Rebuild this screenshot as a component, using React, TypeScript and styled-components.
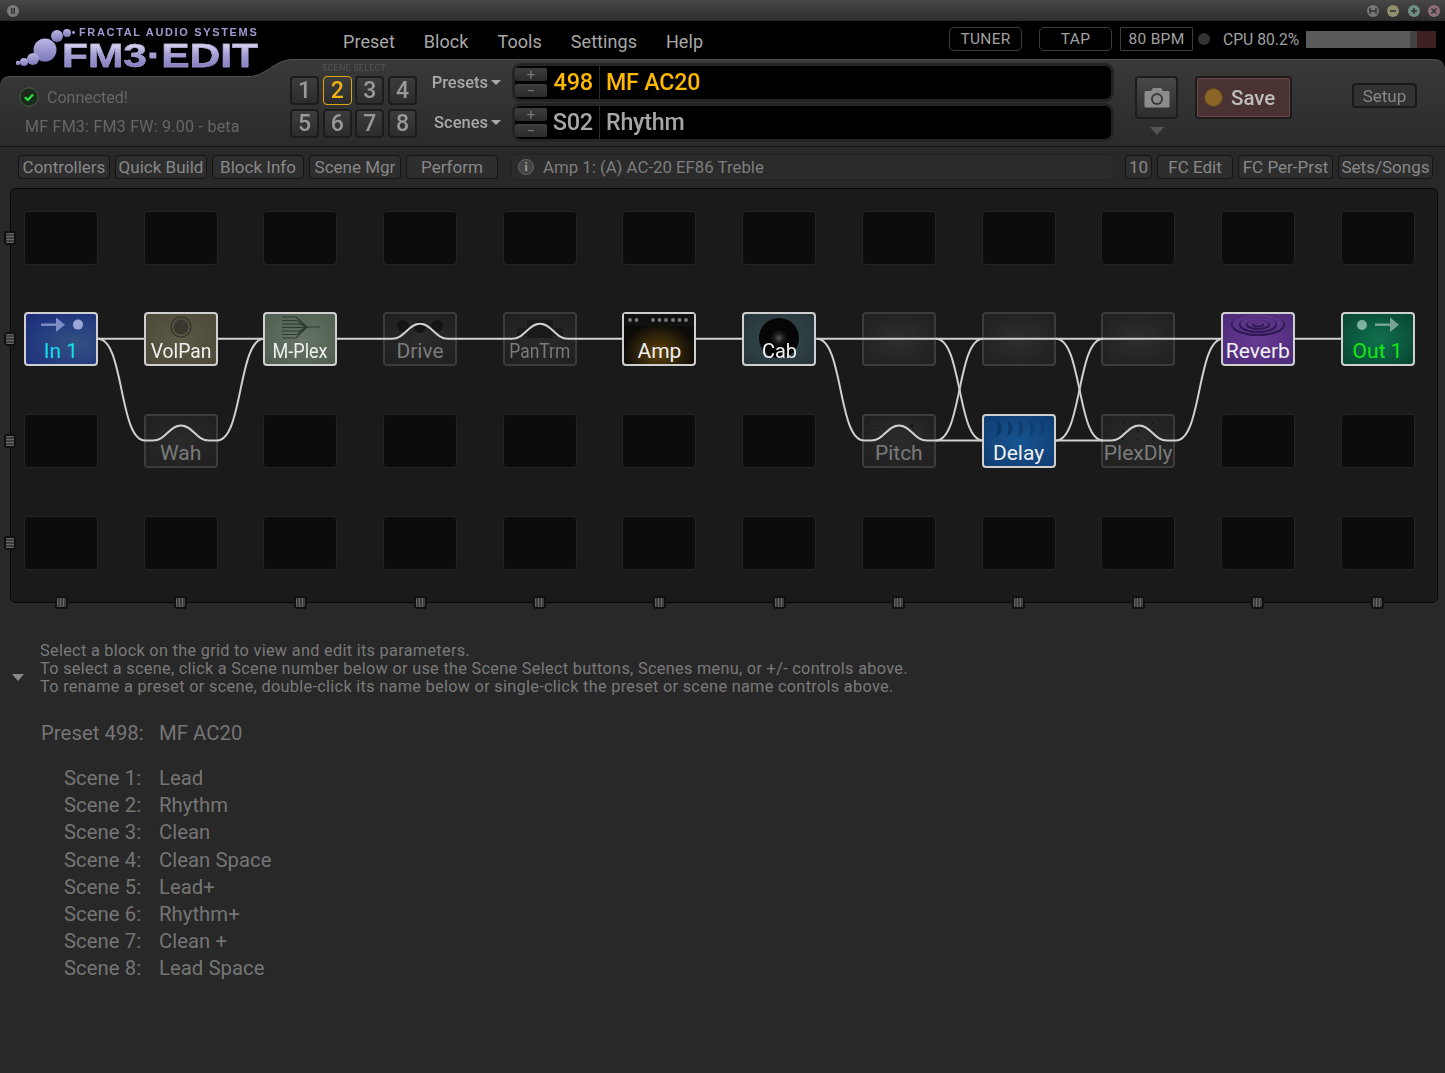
import React from "react";
import styled, { createGlobalStyle } from "styled-components";

const GlobalStyle = createGlobalStyle`
  html, body {
    margin: 0;
    padding: 0;
    background: #282828;
  }
  * {
    box-sizing: border-box;
  }
`;

const COL_WIDTH = 74;
const COL_GAP = 45.7;
const ROW_HEIGHT = 54;
const ROW_GAP = 47.7;
const WIRE_TOP = 338.8;
const WIRE_BOTTOM = 440.5;

type Tone = "in" | "vol" | "plex" | "amp" | "cab" | "delay" | "reverb" | "out" | "dim" | "shunt" | "empty";

type Cell = { tone: Tone; label?: string; squeeze?: number };

const empty: Cell = { tone: "empty" };

const rows: Cell[][] = [
  Array(12).fill(empty),
  [
    { tone: "in", label: "In 1" },
    { tone: "vol", label: "VolPan", squeeze: 0.92 },
    { tone: "plex", label: "M-Plex", squeeze: 0.86 },
    { tone: "dim", label: "Drive" },
    { tone: "dim", label: "PanTrm", squeeze: 0.83 },
    { tone: "amp", label: "Amp" },
    { tone: "cab", label: "Cab", squeeze: 0.95 },
    { tone: "shunt" },
    { tone: "shunt" },
    { tone: "shunt" },
    { tone: "reverb", label: "Reverb" },
    { tone: "out", label: "Out 1" },
  ],
  [
    empty,
    { tone: "dim", label: "Wah" },
    empty,
    empty,
    empty,
    empty,
    empty,
    { tone: "dim", label: "Pitch" },
    { tone: "delay", label: "Delay" },
    { tone: "dim", label: "PlexDly" },
    empty,
    empty,
  ],
  Array(12).fill(empty),
];

const toneBackground: Record<Tone, string> = {
  in: "radial-gradient(ellipse at 70% 60%, #34517f 0%, #233a80 60%, #1c2a78 100%)",
  vol: "radial-gradient(ellipse at center, #5c5845 0%, #4d4938 100%)",
  plex: "radial-gradient(ellipse at center, #667564 0%, #4f5e50 100%)",
  amp: "radial-gradient(ellipse 36px 30px at 50% 78%, #5d4208 0%, #33250a 55%, #0c0b08 100%)",
  cab: "radial-gradient(ellipse at center, #374a4e 0%, #26353a 100%)",
  delay: "radial-gradient(ellipse at center, #175590 0%, #0f3c72 100%)",
  reverb: "radial-gradient(ellipse at center, #673a93 0%, #4c2a78 100%)",
  out: "radial-gradient(ellipse at center, #11714f 0%, #084430 100%)",
  dim: "radial-gradient(ellipse at center, #2b2b2b 0%, #1f1f1f 100%)",
  shunt: "radial-gradient(ellipse at center, #2e2e2e 0%, #1f1f1f 100%)",
  empty: "#0c0c0c",
};

const toneLabel: Partial<Record<Tone, string>> = {
  in: "#17dcee",
  out: "#12e812",
  dim: "#7b7b7b",
};

const Root = styled.div`
  position: relative;
  width: 1445px;
  height: 1073px;
  overflow: hidden;
  background: #282828;
  font-family: Roboto, "Liberation Sans", sans-serif;
  color: #808080;
`;

const TitleBar = styled.div`
  height: 21px;
  display: flex;
  align-items: center;
  justify-content: space-between;
  padding: 0 5px 0 7px;
  background: linear-gradient(#474747, #2c2c2c);
`;

const WindowButtons = styled.div`
  display: flex;
  gap: 8.3px;
`;

const WindowButton = styled.span<{ $color: string }>`
  width: 12px;
  height: 12px;
  border-radius: 50%;
  background: ${(p) => p.$color};
  display: flex;
  align-items: center;
  justify-content: center;
`;

const TopArea = styled.div`
  position: relative;
  background: #000;
`;

const MenuRow = styled.div`
  height: 39px;
  display: flex;
  align-items: flex-start;
  padding-left: 343px;
`;

const Menu = styled.nav`
  display: flex;
  gap: 29px;
  width: 606px;
  padding-top: 10px;
`;

const MenuItem = styled.span`
  font-size: 18px;
  line-height: 21px;
  letter-spacing: 0.05px;
  color: #a8a8a8;
`;

const Logo = styled.div`
  position: absolute;
  left: 0;
  top: 0;
  width: 270px;
  height: 72px;
`;

const LogoTag = styled.div`
  position: absolute;
  left: 79px;
  top: 5px;
  font-family: "Liberation Sans", sans-serif;
  font-size: 10.5px;
  line-height: 12px;
  font-weight: 700;
  letter-spacing: 1.6px;
  color: #a09bd2;
  white-space: nowrap;
  transform: scaleX(1.045);
  transform-origin: left center;
`;

const LogoName = styled.div`
  position: absolute;
  left: 62px;
  top: 20px;
  font-family: "Liberation Sans", sans-serif;
  font-size: 34px;
  line-height: 28px;
  font-weight: 700;
  white-space: nowrap;
  transform: scaleX(1.25);
  transform-origin: left center;
  background: linear-gradient(#e0def0 5%, #a7a2d6 45%, #7f79bd 100%);
  -webkit-background-clip: text;
  background-clip: text;
  color: transparent;
  -webkit-text-stroke: 0.4px #a7a2d6;
`;

const Transport = styled.div`
  display: flex;
  align-items: center;
  height: 24px;
  margin-top: 6px;
`;

const TransportButton = styled.div<{ $square?: boolean; $gap: number }>`
  width: 73px;
  height: 24px;
  margin-right: ${(p) => p.$gap}px;
  display: flex;
  align-items: center;
  justify-content: center;
  font-size: 15.5px;
  letter-spacing: 0.3px;
  color: #a0a0a0;
  border: 1px solid #3d3d3d;
  border-radius: ${(p) => (p.$square ? "1px" : "5px")};
`;

const Led = styled.span`
  width: 12px;
  height: 12px;
  border-radius: 50%;
  background: #333;
  margin-right: 13px;
`;

const CpuLabel = styled.span`
  width: 83px;
  font-size: 15.7px;
  color: #a0a0a0;
  white-space: nowrap;
`;

const CpuBar = styled.div`
  width: 130px;
  height: 17px;
  display: flex;
  background: #3d2020;
`;

const CpuSegment = styled.div<{ $color: string }>`
  height: 100%;
  background: ${(p) => p.$color};
`;

const PanelEdge = styled.div`
  filter: drop-shadow(0 -1px 0 #505050);
`;

const Panel = styled.div`
  height: 87px;
  display: flex;
  background: linear-gradient(#393939, #2b2b2b);
  border-bottom: 1px solid #111;
  clip-path: path("M0 28 Q0 17 11 17 L248 17 C256 17 260 15 268 10 L276 5 Q284 0 293 0 L1433 0 Q1445 0 1445 12 L1445 87 L0 87 Z");
`;

const Status = styled.div`
  width: 290px;
  padding: 27px 0 0 19px;
`;

const StatusLine = styled.div`
  display: flex;
  align-items: center;
  gap: 8px;
  height: 20px;
  font-size: 16px;
  color: #666;
`;

const Firmware = styled.div`
  margin: 10px 0 0 6px;
  font-size: 16px;
  line-height: 20px;
  letter-spacing: 0.25px;
  color: #666;
  white-space: nowrap;
`;

const SceneColumn = styled.div`
  width: 127px;
`;

const SceneCaption = styled.div`
  height: 16px;
  padding: 3px 0 0 32px;
  font-size: 9px;
  line-height: 11px;
  letter-spacing: 0.2px;
  color: #555;
  white-space: nowrap;
`;

const SceneGrid = styled.div`
  display: grid;
  grid-template-columns: repeat(4, 29px);
  column-gap: 3.7px;
  row-gap: 4px;
`;

const SceneButton = styled.div<{ $active?: boolean }>`
  height: 29px;
  display: flex;
  align-items: center;
  justify-content: center;
  font-size: 23px;
  font-weight: 500;
  border-radius: 4px;
  background: linear-gradient(#3c3c3c, #2c2c2c);
  color: ${(p) => (p.$active ? "#eeb015" : "#999")};
  border: ${(p) => (p.$active ? "1px solid #e0a410" : "2px solid #1c1c1c")};
`;

const SelectorColumn = styled.div`
  width: 87px;
  display: flex;
  flex-direction: column;
  gap: 19px;
  padding: 12px 3px 0 0;
`;

const Selector = styled.div`
  height: 21px;
  display: flex;
  align-items: center;
  justify-content: flex-end;
  gap: 3px;
  font-size: 16.5px;
  font-weight: 500;
  color: #a8a8a8;
`;

const Caret = styled.span<{ $w: number; $h: number; $color: string }>`
  display: block;
  width: 0;
  height: 0;
  border-left: ${(p) => p.$w / 2}px solid transparent;
  border-right: ${(p) => p.$w / 2}px solid transparent;
  border-top: ${(p) => p.$h}px solid ${(p) => p.$color};
`;

const Displays = styled.div`
  width: 602px;
  margin: 3px 0 0 8px;
  display: flex;
  flex-direction: column;
  gap: 1px;
`;

const Display = styled.div`
  height: 39px;
  display: flex;
  align-items: stretch;
  background: #000;
  border: 3px solid #242424;
  border-radius: 9px;
`;

const Stepper = styled.div`
  width: 32px;
  margin: 2px 0;
  display: flex;
  flex-direction: column;
  gap: 3px;
`;

const StepButton = styled.div`
  flex: 1;
  display: flex;
  align-items: center;
  justify-content: center;
  font-size: 15px;
  line-height: 10px;
  color: #7a7a7a;
  background: linear-gradient(#3e3e3e, #2a2a2a);
  border-radius: 2px;
`;

const DisplayNumber = styled.div<{ $color: string }>`
  width: 53px;
  padding-right: 6px;
  text-align: right;
  border-right: 1px solid #2c2c2c;
  font-size: 23.5px;
  line-height: 33px;
  font-weight: 500;
  letter-spacing: -0.2px;
  color: ${(p) => p.$color};
`;

const DisplayName = styled.div<{ $color: string }>`
  padding-left: 6px;
  font-size: 23.2px;
  line-height: 33px;
  font-weight: 500;
  letter-spacing: -0.2px;
  color: ${(p) => p.$color};
`;

const CameraColumn = styled.div`
  width: 43px;
  margin: 16px 0 0 21px;
  display: flex;
  flex-direction: column;
  align-items: center;
  gap: 8px;
`;

const CameraButton = styled.div`
  width: 43px;
  height: 43px;
  display: flex;
  align-items: center;
  justify-content: center;
  background: linear-gradient(#484848, #2d2d2d);
  border: 2px solid #1d1d1d;
  border-radius: 4px;
`;

const SaveButton = styled.div`
  width: 97px;
  height: 43px;
  margin: 16px 0 0 17px;
  display: flex;
  align-items: center;
  gap: 8px;
  padding-left: 7px;
  background: #4a3232;
  border: 2px solid #1f1a1a;
  outline: 1px solid #654c4c;
  outline-offset: -3px;
  border-radius: 4px;
  font-size: 20.5px;
  font-weight: 500;
  color: #bcbcbc;
`;

const SaveLed = styled.span`
  width: 19px;
  height: 19px;
  border-radius: 50%;
  background: #8b6428;
  border: 1px solid #5c4220;
`;

const SetupButton = styled.div`
  width: 65px;
  height: 25px;
  margin: 23px 0 0 60px;
  display: flex;
  align-items: center;
  justify-content: center;
  font-size: 17px;
  color: #888;
  background: #323232;
  border: 2px solid #191919;
  border-radius: 4px;
`;

const Toolbar = styled.div`
  height: 40px;
  display: flex;
  align-items: center;
  padding: 0 0 0 18px;
`;

const ToolGroup = styled.div<{ $gap: number }>`
  display: flex;
  gap: ${(p) => p.$gap}px;
`;

const ToolButton = styled.div<{ $w: number }>`
  width: ${(p) => p.$w}px;
  height: 24px;
  display: flex;
  align-items: center;
  justify-content: center;
  font-size: 17px;
  color: #888;
  background: #2e2e2e;
  border: 1px solid #141414;
  border-radius: 4px;
  white-space: nowrap;
`;

const InfoBar = styled.div`
  width: 603px;
  height: 26px;
  margin: 0 11px 0 13px;
  display: flex;
  align-items: center;
  gap: 9px;
  padding-left: 6px;
  font-size: 16.8px;
  color: #7d7d7d;
  background: #2b2b2b;
  border: 1px solid #222;
  border-radius: 5px;
`;

const InfoIcon = styled.span`
  width: 16px;
  height: 16px;
  border-radius: 50%;
  display: flex;
  align-items: center;
  justify-content: center;
  background: #444;
  border: 1px solid #666;
  color: #999;
  font-family: "Liberation Serif", serif;
  font-size: 13px;
  font-weight: 700;
`;

const GridPanel = styled.div`
  position: relative;
  width: 1428px;
  height: 415px;
  margin: 1px 0 0 10px;
  padding: 21.6px 13px 0;
  background: #1a1a1a;
  border: 1px solid #080808;
  border-radius: 6px;
`;

const Grid = styled.div`
  display: grid;
  grid-template-columns: repeat(12, ${COL_WIDTH}px);
  grid-auto-rows: ${ROW_HEIGHT}px;
  column-gap: ${COL_GAP}px;
  row-gap: ${ROW_GAP}px;
`;

const Block = styled.div<{ $tone: Tone }>`
  position: relative;
  display: flex;
  align-items: flex-end;
  justify-content: center;
  font-size: 21px;
  line-height: 26px;
  white-space: nowrap;
  background: ${(p) => toneBackground[p.$tone]};
  color: ${(p) => toneLabel[p.$tone] ?? "#f0f0f0"};
  border-radius: 4px;
  border: ${(p) => (p.$tone === "empty" ? "1px" : "2px")} solid
    ${(p) =>
      p.$tone === "empty"
        ? "#232323"
        : p.$tone === "dim" || p.$tone === "shunt"
          ? "#3c3c3c"
          : "#cfcfcf"};
`;

const BlockLabel = styled.span<{ $squeeze?: number }>`
  position: relative;
  transform: scaleX(${(p) => p.$squeeze ?? 1});
`;

const BlockArt = styled.svg`
  position: absolute;
  left: 0;
  top: 0;
`;

const Wires = styled.svg`
  position: absolute;
  left: 0;
  top: 0;
  pointer-events: none;
`;

const RowHandles = styled.div`
  position: absolute;
  left: -7px;
  top: 41.6px;
  display: flex;
  flex-direction: column;
  gap: 87.7px;
`;

const RowHandle = styled.span`
  display: block;
  width: 12px;
  height: 14px;
  border: 2px solid #111;
  border-radius: 3px;
  background: repeating-linear-gradient(#666 0 1px, #3d3d3d 1px 3px);
`;

const ColumnHandles = styled.div`
  position: absolute;
  left: 13px;
  bottom: -7px;
  display: grid;
  grid-template-columns: repeat(12, ${COL_WIDTH}px);
  column-gap: ${COL_GAP}px;
  justify-items: center;
`;

const ColumnHandle = styled.span`
  display: block;
  width: 13px;
  height: 13px;
  border: 2px solid #111;
  border-radius: 3px;
  background: repeating-linear-gradient(90deg, #666 0 1px, #3d3d3d 1px 3px);
`;

const Help = styled.div`
  display: flex;
  margin-top: 39px;
  padding-left: 12px;
`;

const HelpCaret = styled.div`
  width: 28px;
  padding-top: 32px;
`;

const HelpText = styled.div`
  font-size: 16.3px;
  line-height: 18px;
  letter-spacing: 0.3px;
  color: #7a7a7a;
  white-space: nowrap;
`;

const Summary = styled.div`
  margin-top: 24px;
  font-size: 20.3px;
  line-height: 27.15px;
  letter-spacing: 0.05px;
  color: #757575;
`;

const SummaryRow = styled.div<{ $scene?: boolean }>`
  display: flex;
  padding-left: ${(p) => (p.$scene ? 64 : 41)}px;
`;

const SummaryKey = styled.span<{ $scene?: boolean }>`
  width: ${(p) => (p.$scene ? 95 : 118)}px;
`;

const SceneList = styled.div`
  margin-top: 18px;
`;

const scenes = ["Lead", "Rhythm", "Clean", "Clean Space", "Lead+", "Rhythm+", "Clean +", "Lead Space"];

const sCurve = (x0: number, y0: number, x1: number, y1: number) =>
  `M${x0} ${y0} C${x0 + 26} ${y0} ${x1 - 26} ${y1} ${x1} ${y1}`;

const bump = (cx: number, y: number) =>
  `M${cx - 28} ${y} C${cx - 15} ${y} ${cx - 12} ${y - 15} ${cx} ${y - 15} C${cx + 12} ${y - 15} ${cx + 15} ${y} ${cx + 28} ${y}`;

const line = (x0: number, x1: number, y: number) => `M${x0} ${y} L${x1} ${y}`;

const wirePaths = [
  line(97, 144, WIRE_TOP),
  line(217, 264, WIRE_TOP),
  line(337, 392, WIRE_TOP),
  bump(420, WIRE_TOP),
  line(448, 512, WIRE_TOP),
  bump(540, WIRE_TOP),
  line(568, 623, WIRE_TOP),
  line(696, 743, WIRE_TOP),
  line(816, 1222, WIRE_TOP),
  line(1295, 1342, WIRE_TOP),
  sCurve(98, WIRE_TOP, 145, WIRE_BOTTOM),
  line(145, 153, WIRE_BOTTOM),
  bump(181, WIRE_BOTTOM),
  line(209, 217, WIRE_BOTTOM),
  sCurve(217, WIRE_BOTTOM, 264, WIRE_TOP),
  sCurve(817, WIRE_TOP, 864, WIRE_BOTTOM),
  line(864, 871, WIRE_BOTTOM),
  bump(899, WIRE_BOTTOM),
  line(927, 983, WIRE_BOTTOM),
  sCurve(936, WIRE_BOTTOM, 983, WIRE_TOP),
  sCurve(936, WIRE_TOP, 983, WIRE_BOTTOM),
  line(1056, 1111, WIRE_BOTTOM),
  bump(1139, WIRE_BOTTOM),
  line(1167, 1176, WIRE_BOTTOM),
  sCurve(1056, WIRE_BOTTOM, 1103, WIRE_TOP),
  sCurve(1056, WIRE_TOP, 1103, WIRE_BOTTOM),
  sCurve(1176, WIRE_BOTTOM, 1223, WIRE_TOP),
];

const Arrow = ({ x, color }: { x: number; color: string }) => (
  <g fill={color}>
    <rect x={x} y={9.5} width={20} height={2.4} />
    <path d={`M${x + 15} 3.5 L${x + 24} 10.7 L${x + 15} 17.9 Z`} />
  </g>
);

const artFor = (cell: Cell, col: number, row: number) => {
  if (cell.tone === "in") {
    return (
      <>
        <Arrow x={15} color="#7f8ec6" />
        <circle cx={52} cy={10.6} r={5} fill="#9aa7d6" />
      </>
    );
  }
  if (cell.tone === "out") {
    return (
      <>
        <circle cx={19} cy={11} r={5} fill="#80b0a0" />
        <Arrow x={32} color="#78a596" />
      </>
    );
  }
  if (cell.tone === "vol") {
    return (
      <>
        <circle cx={35} cy={13} r={10} fill="none" stroke="#33312a" strokeWidth={1.2} />
        <circle cx={35} cy={13} r={7.5} fill="#3a382e" />
      </>
    );
  }
  if (cell.tone === "plex") {
    return (
      <g fill="none" stroke="#2e3a30" strokeWidth={1.2}>
        <path d="M17 3 H31 L42 13 H55" />
        <path d="M17 6.5 H32 L42 13" />
        <path d="M17 10 H34 L42 13" />
        <path d="M17 13.5 H42" />
        <path d="M17 17 H34 L42 13" />
        <path d="M17 20.5 H32 L42 13" />
        <path d="M17 24 H31 L42 13" />
      </g>
    );
  }
  if (cell.tone === "amp") {
    const dots = [6, 12.5, 29, 35.5, 42, 49, 55.5, 62];
    return (
      <>
        <rect x={0} y={0} width={70} height={12} fill="#111" />
        {dots.map((x) => (
          <circle key={x} cx={x} cy={6} r={1.9} fill="#7a7a7a" />
        ))}
      </>
    );
  }
  if (cell.tone === "cab") {
    return (
      <>
        <defs>
          <radialGradient id="cone" cx="50%" cy="50%" r="50%">
            <stop offset="0%" stopColor="#555" />
            <stop offset="55%" stopColor="#1a1a1a" />
            <stop offset="100%" stopColor="#050505" />
          </radialGradient>
        </defs>
        <circle cx={35} cy={24} r={20} fill="#060606" />
        <circle cx={35} cy={24} r={9} fill="url(#cone)" />
      </>
    );
  }
  if (cell.tone === "delay") {
    return (
      <g fill="#0c3768">
        {[11.7, 22.7, 33.3, 44.7, 55.3].map((x, i) => (
          <path
            key={x}
            d={`M${x} 4 C${x + 8} 9 ${x + 8} 16 ${x} 21 C${x + 2.5} 16 ${x + 2.5} 9 ${x} 4 Z`}
            opacity={1 - i * 0.14}
          />
        ))}
      </g>
    );
  }
  if (cell.tone === "reverb") {
    return (
      <>
        {[
          [27, 11],
          [19, 8],
          [12, 5],
          [6, 2.5],
        ].map(([rx, ry]) => (
          <React.Fragment key={rx}>
            <ellipse cx={35} cy={11} rx={rx} ry={ry} fill="#2f1854" />
            <ellipse cx={35} cy={10} rx={rx - 1.5} ry={ry - 1} fill="#5c3486" />
          </React.Fragment>
        ))}
      </>
    );
  }
  if (cell.tone === "dim" && col === 3 && row === 1) {
    return (
      <g fill="#141414">
        <circle cx={18} cy={12} r={6} />
        <circle cx={35} cy={13} r={6} />
        <circle cx={52} cy={12} r={6} />
      </g>
    );
  }
  if (cell.tone === "dim" && col === 4) {
    return (
      <g fill="#1a1a1a">
        <rect x={22} y={6} width={26} height={18} />
        <rect x={12} y={14} width={46} height={8} />
      </g>
    );
  }
  if (cell.tone === "dim" && col === 7) {
    return (
      <g stroke="#2a2a2a" strokeWidth={1}>
        <path d="M10 8 H60 M10 12 H60 M10 16 H60" />
        <circle cx={48} cy={10} r={2.5} fill="#161616" />
      </g>
    );
  }
  if (cell.tone === "dim" && col === 9) {
    return (
      <g fill="#161616">
        {[20, 35, 50].map((x) => (
          <React.Fragment key={x}>
            <circle cx={x} cy={7} r={1} />
            <circle cx={x} cy={15} r={1} />
            <circle cx={x} cy={23} r={1} />
          </React.Fragment>
        ))}
      </g>
    );
  }
  return null;
};

const App = () => {
  return (
    <Root>
      <GlobalStyle />
      <TitleBar>
        <WindowButton $color="#7a7a7a">
          <svg width="6" height="6" viewBox="0 0 6 6">
            <path d="M1 0 H2.5 V6 H1 Z M3.5 0 H5 V6 H3.5 Z" fill="#333" />
          </svg>
        </WindowButton>
        <WindowButtons>
          <WindowButton $color="#767676">
            <svg width="8" height="8" viewBox="0 0 8 8">
              <path d="M1 1 V7 M7 1 V7 M1 4 H7" stroke="#333" strokeWidth="1.4" fill="none" />
            </svg>
          </WindowButton>
          <WindowButton $color="#8f8f6c">
            <svg width="8" height="8" viewBox="0 0 8 8">
              <path d="M1 4 H7" stroke="#333" strokeWidth="1.6" />
            </svg>
          </WindowButton>
          <WindowButton $color="#6f8f84">
            <svg width="8" height="8" viewBox="0 0 8 8">
              <path d="M1 4 H7 M4 1 V7" stroke="#333" strokeWidth="1.6" />
            </svg>
          </WindowButton>
          <WindowButton $color="#8e6f7a">
            <svg width="8" height="8" viewBox="0 0 8 8">
              <path d="M1.5 1.5 L6.5 6.5 M6.5 1.5 L1.5 6.5" stroke="#333" strokeWidth="1.6" />
            </svg>
          </WindowButton>
        </WindowButtons>
      </TitleBar>

      <TopArea>
        <MenuRow>
          <Menu>
            <MenuItem>Preset</MenuItem>
            <MenuItem>Block</MenuItem>
            <MenuItem>Tools</MenuItem>
            <MenuItem>Settings</MenuItem>
            <MenuItem>Help</MenuItem>
          </Menu>
          <Transport>
            <TransportButton $gap={17}>TUNER</TransportButton>
            <TransportButton $gap={8}>TAP</TransportButton>
            <TransportButton $gap={5} $square>
              80 BPM
            </TransportButton>
            <Led />
            <CpuLabel>CPU 80.2%</CpuLabel>
            <CpuBar>
              <CpuSegment $color="#5a5a5a" style={{ width: "80%" }} />
              <CpuSegment $color="#444" style={{ width: "5%" }} />
            </CpuBar>
          </Transport>
        </MenuRow>

        <PanelEdge>
          <Panel>
            <Status>
              <StatusLine>
                <svg width="20" height="20" viewBox="0 0 20 20">
                  <circle cx="10" cy="10" r="9.2" fill="#1c2a1c" stroke="#4d5f4d" strokeWidth="1" />
                  <path d="M5.8 10.3 L8.8 13 L14 7.4" fill="none" stroke="#22e83a" strokeWidth="2.2" />
                </svg>
                Connected!
              </StatusLine>
              <Firmware>MF FM3: FM3 FW: 9.00 - beta</Firmware>
            </Status>

            <SceneColumn>
              <SceneCaption>SCENE SELECT</SceneCaption>
              <SceneGrid>
                {[1, 2, 3, 4, 5, 6, 7, 8].map((n) => (
                  <SceneButton key={n} $active={n === 2}>
                    {n}
                  </SceneButton>
                ))}
              </SceneGrid>
            </SceneColumn>

            <SelectorColumn>
              <Selector>
                Presets
                <Caret $w={11} $h={5} $color="#aaa" />
              </Selector>
              <Selector>
                Scenes
                <Caret $w={11} $h={5} $color="#aaa" />
              </Selector>
            </SelectorColumn>

            <Displays>
              <Display>
                <Stepper>
                  <StepButton>+</StepButton>
                  <StepButton>−</StepButton>
                </Stepper>
                <DisplayNumber $color="#ffb800">498</DisplayNumber>
                <DisplayName $color="#ffb800">MF AC20</DisplayName>
              </Display>
              <Display>
                <Stepper>
                  <StepButton>+</StepButton>
                  <StepButton>−</StepButton>
                </Stepper>
                <DisplayNumber $color="#a6a6a6">S02</DisplayNumber>
                <DisplayName $color="#a6a6a6">Rhythm</DisplayName>
              </Display>
            </Displays>

            <CameraColumn>
              <CameraButton>
                <svg width="26" height="21" viewBox="0 0 26 21">
                  <path
                    d="M2 4 H7 L9 1 H17 L19 4 H24 Q25.5 4 25.5 5.5 V19 Q25.5 20.5 24 20.5 H2 Q0.5 20.5 0.5 19 V5.5 Q0.5 4 2 4 Z"
                    fill="#8c8c8c"
                  />
                  <circle cx="13" cy="12" r="6" fill="#3a3a3a" />
                  <circle cx="13" cy="12" r="4" fill="#8c8c8c" />
                </svg>
              </CameraButton>
              <Caret $w={14} $h={8} $color="#555" />
            </CameraColumn>

            <SaveButton>
              <SaveLed />
              Save
            </SaveButton>

            <SetupButton>Setup</SetupButton>
          </Panel>
        </PanelEdge>

        <Logo>
          <svg width="80" height="72" viewBox="0 0 80 72" style={{ display: "block" }}>
            <defs>
              <linearGradient id="orb" x1="0" y1="0" x2="0" y2="1">
                <stop offset="0%" stopColor="#b9b5e2" />
                <stop offset="100%" stopColor="#7d77bb" />
              </linearGradient>
            </defs>
            <g fill="url(#orb)">
              <circle cx="45" cy="29" r="11.5" />
              <circle cx="57" cy="15" r="6" />
              <circle cx="67" cy="12" r="4" />
              <circle cx="73.5" cy="11.5" r="1.6" />
              <circle cx="33" cy="38" r="6" />
              <circle cx="24" cy="41" r="4" />
              <circle cx="18" cy="42" r="2.2" />
            </g>
          </svg>
          <LogoTag>FRACTAL AUDIO SYSTEMS</LogoTag>
          <LogoName>FM3·EDIT</LogoName>
        </Logo>
      </TopArea>

      <Toolbar>
        <ToolGroup $gap={5}>
          <ToolButton $w={92}>Controllers</ToolButton>
          <ToolButton $w={92}>Quick Build</ToolButton>
          <ToolButton $w={92}>Block Info</ToolButton>
          <ToolButton $w={92}>Scene Mgr</ToolButton>
          <ToolButton $w={92}>Perform</ToolButton>
        </ToolGroup>
        <InfoBar>
          <InfoIcon>i</InfoIcon>
          Amp 1: (A) AC-20 EF86 Treble
        </InfoBar>
        <ToolGroup $gap={5}>
          <ToolButton $w={27}>10</ToolButton>
          <ToolButton $w={76}>FC Edit</ToolButton>
          <ToolButton $w={95}>FC Per-Prst</ToolButton>
          <ToolButton $w={95}>Sets/Songs</ToolButton>
        </ToolGroup>
      </Toolbar>

      <GridPanel>
        <Grid>
          {rows.map((row, r) =>
            row.map((cell, c) => (
              <Block key={`${r}-${c}`} $tone={cell.tone}>
                <BlockArt width="70" height="50" viewBox="0 0 70 50">
                  {artFor(cell, c, r)}
                </BlockArt>
                {cell.label && <BlockLabel $squeeze={cell.squeeze}>{cell.label}</BlockLabel>}
              </Block>
            )),
          )}
        </Grid>
        <Wires width="1426" height="413" viewBox="11 189 1426 413" fill="none">
          {wirePaths.map((d, i) => (
            <path key={i} d={d} stroke="#d0d0d0" strokeWidth="2" />
          ))}
        </Wires>
        <RowHandles>
          {[0, 1, 2, 3].map((i) => (
            <RowHandle key={i} />
          ))}
        </RowHandles>
        <ColumnHandles>
          {Array.from({ length: 12 }, (_, i) => (
            <ColumnHandle key={i} />
          ))}
        </ColumnHandles>
      </GridPanel>

      <Help>
        <HelpCaret>
          <Caret $w={13} $h={7} $color="#8a8a8a" />
        </HelpCaret>
        <HelpText>
          Select a block on the grid to view and edit its parameters.
          <br />
          To select a scene, click a Scene number below or use the Scene Select buttons, Scenes menu, or +/- controls above.
          <br />
          To rename a preset or scene, double-click its name below or single-click the preset or scene name controls above.
        </HelpText>
      </Help>

      <Summary>
        <SummaryRow>
          <SummaryKey>Preset 498:</SummaryKey>
          MF AC20
        </SummaryRow>
        <SceneList>
          {scenes.map((name, i) => (
            <SummaryRow key={name} $scene>
              <SummaryKey $scene>Scene {i + 1}:</SummaryKey>
              {name}
            </SummaryRow>
          ))}
        </SceneList>
      </Summary>
    </Root>
  );
};

export default App;
